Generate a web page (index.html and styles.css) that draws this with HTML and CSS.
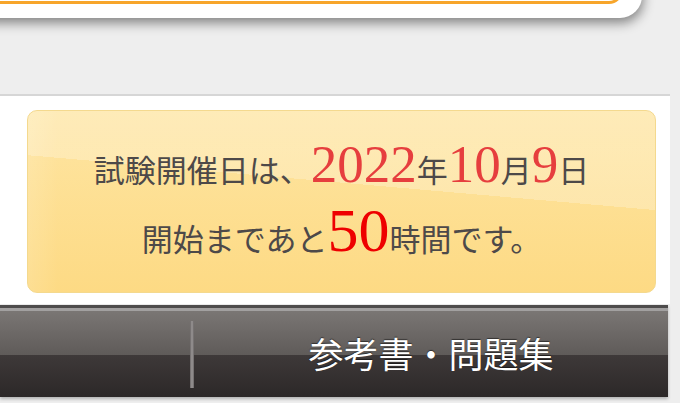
FILE: index.html
```html
<!DOCTYPE html>
<html lang="ja">
<head>
<meta charset="utf-8">
<link rel="stylesheet" href="styles.css">
</head>
<body>
<div class="topcard"><div class="topinner"></div></div>
<div class="panel">
  <div class="countdown">
    <div class="line line1"><span class="sm">試験開催日は、</span><span class="num">2022</span><span class="sm">年</span><span class="num">10</span><span class="sm">月</span><span class="num">9</span><span class="sm">日</span></div>
    <div class="line line2"><span class="sm">開始まであと</span><span class="big">50</span><span class="sm">時間です。</span></div>
  </div>
</div>
<nav class="nav">
  <div class="navitem first"></div>
  <div class="sep"></div>
  <div class="navitem">参考書・問題集</div>
</nav>
</body>
</html>
```
FILE: styles.css
```css
html, body {
  margin: 0;
  padding: 0;
}
body {
  background: #eeeeee;
  width: 680px;
  height: 403px;
  overflow: hidden;
  font-family: "Noto Sans CJK JP", "Noto Sans", sans-serif;
}
.topcard {
  width: 662px;
  height: 58px;
  margin-top: -40px;
  margin-left: -20px;
  background: #ffffff;
  border-radius: 0 0 22px 0;
  box-shadow: 1px 5px 12px rgba(0, 0, 0, 0.45);
  box-sizing: border-box;
  padding-right: 19px;
}
.topinner {
  height: 44px;
  border-right: 3px solid #f7a52a;
  border-bottom: 3px solid #f7a52a;
  border-radius: 0 0 14px 0;
  box-sizing: border-box;
}
.panel {
  margin-top: 76px;
  width: 670px;
  height: 210px;
  box-sizing: border-box;
  background: #ffffff;
  border-top: 2px solid #d6d6d6;
  padding: 14px 14px 0 27px;
}
.countdown {
  height: 183px;
  box-sizing: border-box;
  border: 1px solid #f4d98e;
  border-radius: 10px;
  background:
    linear-gradient(185deg, rgba(255, 255, 255, 0.24) 0 42%, rgba(255, 255, 255, 0) 42%),
    linear-gradient(90deg, rgba(255, 255, 255, 0.12) 0, rgba(255, 255, 255, 0) 30px),
    linear-gradient(180deg, #fee5a2 0%, #fdda84 100%);
  color: #4d4949;
  text-align: center;
  padding-top: 22px;
}
.line {
  white-space: nowrap;
}
.line1 {
  height: 62px;
  line-height: 62px;
}
.line2 {
  height: 70px;
  line-height: 70px;
}
.sm {
  font-size: 31px;
}
.num {
  font-family: "Liberation Serif", "DejaVu Serif", serif;
  font-size: 53px;
  color: #e63e3e;
}
.big {
  font-family: "Liberation Serif", "DejaVu Serif", serif;
  font-size: 62px;
  color: #ee0000;
}
.nav {
  margin-top: 1px;
  width: 668px;
  height: 92px;
  box-sizing: border-box;
  display: flex;
  align-items: center;
  border-top: 3px solid #4e4c4c;
  background:
    linear-gradient(180deg, #a2a0a0 0, #a2a0a0 3px, #7a7674 3px, #5f5b59 47px, #3e3939 47px, #2c2828 100%);
  box-shadow: 0 2px 3px rgba(0, 0, 0, 0.25);
}
.navitem {
  flex: 1;
  height: 100%;
  display: flex;
  align-items: center;
  justify-content: center;
  color: #ffffff;
  font-size: 35px;
  text-shadow: 0 -1px 1px rgba(0, 0, 0, 0.5);
}
.navitem.first {
  flex: 0 0 190px;
}
.sep {
  width: 4px;
  height: 67px;
  margin-top: 4px;
  background: linear-gradient(90deg, #6a6666, #9a9696 50%, #6a6666);
}
```
